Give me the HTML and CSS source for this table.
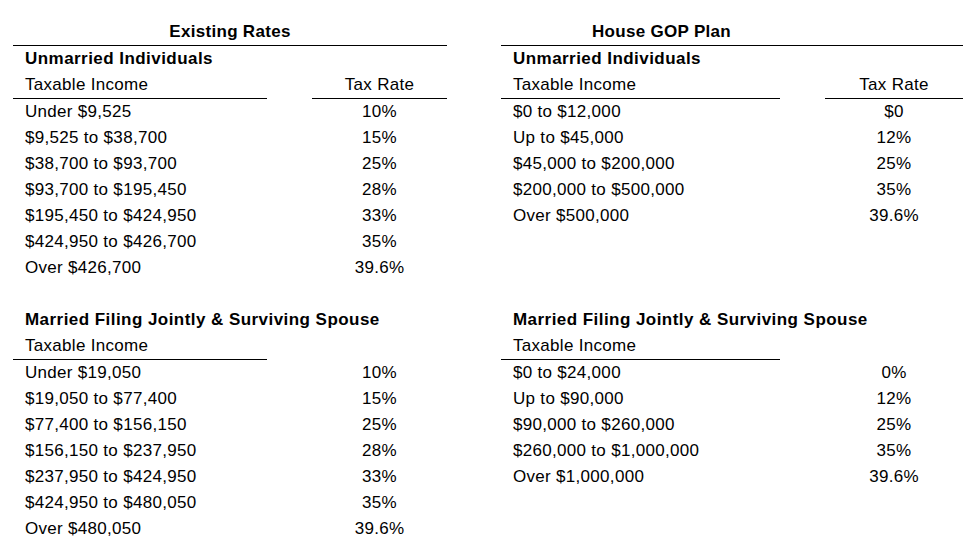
FILE: index.html
```html
<!DOCTYPE html>
<html>
<head>
<meta charset="utf-8">
<link rel="stylesheet" href="styles.css">
</head>
<body>
<div class="page">
  <section class="panel left">
    <div class="title">Existing Rates</div>
    <div class="grp">Unmarried Individuals</div>
    <div class="hdr"><span class="inc ul">Taxable Income</span><span class="rate ul">Tax Rate</span></div>
    <div class="row"><span class="inc">Under $9,525</span><span class="rate">10%</span></div>
    <div class="row"><span class="inc">$9,525 to $38,700</span><span class="rate">15%</span></div>
    <div class="row"><span class="inc">$38,700 to $93,700</span><span class="rate">25%</span></div>
    <div class="row"><span class="inc">$93,700 to $195,450</span><span class="rate">28%</span></div>
    <div class="row"><span class="inc">$195,450 to $424,950</span><span class="rate">33%</span></div>
    <div class="row"><span class="inc">$424,950 to $426,700</span><span class="rate">35%</span></div>
    <div class="row"><span class="inc">Over $426,700</span><span class="rate">39.6%</span></div>
    <div class="row"></div>
    <div class="grp">Married Filing Jointly &amp; Surviving Spouse</div>
    <div class="hdr"><span class="inc ul">Taxable Income</span><span class="rate"></span></div>
    <div class="row"><span class="inc">Under $19,050</span><span class="rate">10%</span></div>
    <div class="row"><span class="inc">$19,050 to $77,400</span><span class="rate">15%</span></div>
    <div class="row"><span class="inc">$77,400 to $156,150</span><span class="rate">25%</span></div>
    <div class="row"><span class="inc">$156,150 to $237,950</span><span class="rate">28%</span></div>
    <div class="row"><span class="inc">$237,950 to $424,950</span><span class="rate">33%</span></div>
    <div class="row"><span class="inc">$424,950 to $480,050</span><span class="rate">35%</span></div>
    <div class="row"><span class="inc">Over $480,050</span><span class="rate">39.6%</span></div>
  </section>
  <section class="panel right">
    <div class="title"><span class="title-text">House GOP Plan</span></div>
    <div class="grp">Unmarried Individuals</div>
    <div class="hdr"><span class="inc ul">Taxable Income</span><span class="rate ul">Tax Rate</span></div>
    <div class="row"><span class="inc">$0 to $12,000</span><span class="rate">$0</span></div>
    <div class="row"><span class="inc">Up to $45,000</span><span class="rate">12%</span></div>
    <div class="row"><span class="inc">$45,000 to $200,000</span><span class="rate">25%</span></div>
    <div class="row"><span class="inc">$200,000 to $500,000</span><span class="rate">35%</span></div>
    <div class="row"><span class="inc">Over $500,000</span><span class="rate">39.6%</span></div>
    <div class="row"></div>
    <div class="row"></div>
    <div class="row"></div>
    <div class="grp">Married Filing Jointly &amp; Surviving Spouse</div>
    <div class="hdr"><span class="inc ul">Taxable Income</span><span class="rate"></span></div>
    <div class="row"><span class="inc">$0 to $24,000</span><span class="rate">0%</span></div>
    <div class="row"><span class="inc">Up to $90,000</span><span class="rate">12%</span></div>
    <div class="row"><span class="inc">$90,000 to $260,000</span><span class="rate">25%</span></div>
    <div class="row"><span class="inc">$260,000 to $1,000,000</span><span class="rate">35%</span></div>
    <div class="row"><span class="inc">Over $1,000,000</span><span class="rate">39.6%</span></div>
  </section>
</div>
</body>
</html>
```
FILE: styles.css
```css
html, body {
  margin: 0;
  padding: 0;
  background: #fff;
}
body {
  font-family: "Liberation Sans", Arial, sans-serif;
  font-size: 17px;
  color: #000;
  letter-spacing: 0.3px;
}
.page {
  display: flex;
  padding: 19px 0 0 13px;
  gap: 54px;
}
.panel {
  display: flex;
  flex-direction: column;
}
.left { width: 434px; }
.right { width: 462px; }
.title {
  height: 26px;
  line-height: 26px;
  font-weight: bold;
  text-align: center;
  border-bottom: 1px solid #000;
  letter-spacing: 0.3px;
}
.right .title {
  text-align: left;
  padding-left: 91px;
}
.grp {
  height: 26px;
  line-height: 26px;
  font-weight: bold;
  padding-left: 12px;
  letter-spacing: 0.45px;
}
.hdr, .row {
  display: flex;
  height: 26px;
  line-height: 26px;
  gap: 45px;
}
.hdr { height: 27px; }
.inc {
  padding-left: 12px;
  white-space: nowrap;
}
.left .inc { width: 242px; }
.right .inc { width: 267px; }
.left .rate { width: 135px; }
.right .rate { width: 138px; }
.rate { text-align: center; }
.ul {
  border-bottom: 1px solid #000;
  height: 26px;
}
```
